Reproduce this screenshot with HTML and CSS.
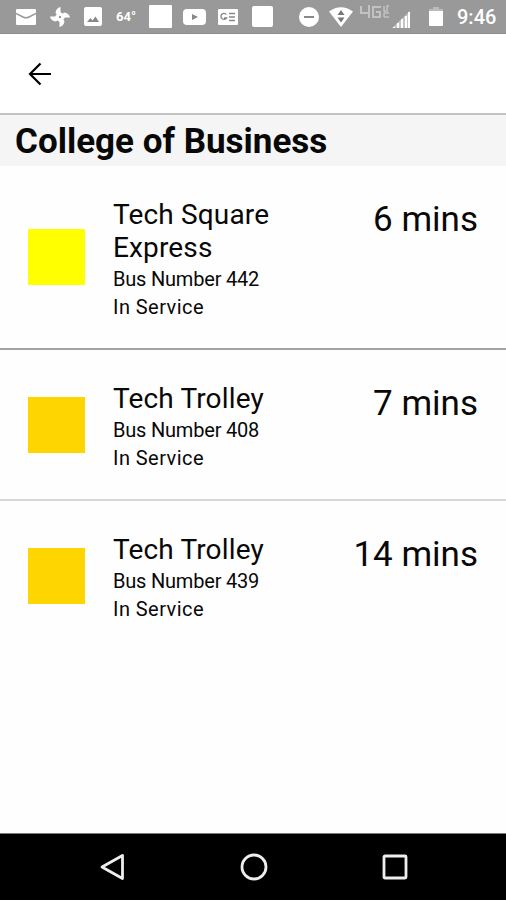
FILE: index.html
```html
<!DOCTYPE html>
<html lang="en">
<head>
<meta charset="utf-8">
<title>College of Business</title>
<link rel="stylesheet" href="styles.css">
</head>
<body>
<div class="screen">
  <header class="status">
    <svg class="ico mail" width="20" height="16" viewBox="0 0 20 16"><rect width="20" height="16" rx="1" fill="#fff"/><path d="M0 4.500l7 3.500q3 1.500 6 0l7-3.500" fill="none" stroke="#999" stroke-width="1.500"/></svg>
    <svg class="ico fan" width="20" height="20" viewBox="0 0 20 20"><g fill="#fff"><path d="M10 11L5.500 6Q6 1 10.500 0V5L13 7z"/><path d="M9 10L14 5.500Q19 6 20 10.500H15L13 13z"/><path d="M10 9L14.500 14Q14 19 9.500 20V15L7 13z"/><path d="M11 10L6 14.500Q1 14 0 9.500H5L7 7z"/></g><circle cx="10" cy="10" r="1.200" fill="#999"/></svg>
    <svg class="ico photo" width="18" height="19" viewBox="0 0 18 19"><rect width="18" height="19" rx="2" fill="#fff"/><path d="M3 15l3.500-4 2 2.500 3-4L15 15z" fill="#888"/></svg>
    <span class="temp">64°</span>
    <span class="block large"></span>
    <svg class="ico tube" width="23" height="16" viewBox="0 0 23 16"><rect width="23" height="16" rx="4" fill="#fff"/><path d="M9 5v6l6-3z" fill="#888"/></svg>
    <svg class="ico news" width="20" height="16" viewBox="0 0 20 16"><rect width="20" height="16" rx="1" fill="#fff"/><path d="M8.300 5.500A3 3 0 1 0 8.500 9H6M11 4.500h6M11 8h6M11 11.500h6" fill="none" stroke="#888" stroke-width="1.400"/></svg>
    <span class="block"></span>
    <svg class="ico dnd" width="20" height="20" viewBox="0 0 20 20"><circle cx="10" cy="10" r="10" fill="#fff"/><path d="M5 10h10" stroke="#888" stroke-width="2"/></svg>
    <svg class="ico wifi" width="24" height="20" viewBox="0 0 24 20"><path d="M0 4.500Q12-4 24 4.500L12 20z" fill="#fff"/><path d="M8.500 8L12 3l3.500 5zM8.500 10.500h7L12 15.500z" fill="#777"/></svg>
    <svg class="ico lte" width="32" height="15" viewBox="0 0 32 15"><g fill="none" stroke="#c2c2c2" stroke-width="2"><path d="M2 1v7h8M10 0v13M22 2h-8v10h7V7h-4"/><path d="M25 1v5h4M25 8h5M25 12h5M25 8v4M30 1h-2v4" stroke-width="1.500"/></g></svg>
    <svg class="ico signal" width="18" height="17" viewBox="0 0 18 17"><path d="M0 17L18 0v17z" fill="#c4c4c4"/><path d="M2 16v1M6 12v5M10 8v9M14 5v12M17 1v16" stroke="#fff" stroke-width="2"/></svg>
    <svg class="ico battery" width="14" height="19" viewBox="0 0 14 19"><path d="M4 0h6v2h4v3H0V2h4z" fill="#bbb"/><path d="M0 4h14v14q0 1-1 1H1q-1 0-1-1z" fill="#fff"/></svg>
    <span class="clock">9:46</span>
  </header>
  <nav class="appbar">
    <svg width="24" height="24" viewBox="0 0 24 24"><path d="M24 12H3M13.500 1.500L3 12l10.500 10.500" fill="none" stroke="#000" stroke-width="2.200"/></svg>
  </nav>
  <h1 class="title">College of Business</h1>
  <main class="list">
    <section class="row strong">
      <span class="swatch yellow"></span>
      <div class="info"><h2>Tech Square Express</h2><p class="bus">Bus Number 442</p><p class="state">In Service</p></div>
      <div class="mins">6 mins</div>
    </section>
    <section class="row">
      <span class="swatch gold"></span>
      <div class="info"><h2>Tech Trolley</h2><p class="bus">Bus Number 408</p><p class="state">In Service</p></div>
      <div class="mins">7 mins</div>
    </section>
    <section class="row last">
      <span class="swatch gold"></span>
      <div class="info"><h2>Tech Trolley</h2><p class="bus">Bus Number 439</p><p class="state">In Service</p></div>
      <div class="mins">14 mins</div>
    </section>
  </main>
  <footer class="navbar">
    <svg width="28" height="28" viewBox="0 0 28 28"><path d="M23.500 2.500v23L3 14z"/></svg>
    <svg width="28" height="28" viewBox="0 0 28 28"><circle cx="14" cy="14" r="12"/></svg>
    <svg width="28" height="28" viewBox="0 0 28 28"><rect x="3" y="3" width="22" height="22" rx="1"/></svg>
  </footer>
</div>
</body>
</html>
```

FILE: styles.css
```css
* { box-sizing: border-box; margin: 0; padding: 0; }
body { font-family: Roboto, "Liberation Sans", sans-serif; background: #fefefe; color: #080808; }
svg { display: block; flex: none; }
.screen { display: flex; flex-direction: column; width: 506px; height: 900px; }
.status { display: flex; align-items: center; height: 34px; padding-left: 16px; background: #999; color: #fff; border-bottom: 1px solid #8d8d8d; flex: none; }
.fan { margin-left: 14px; }
.photo { margin-left: 14px; }
.temp { width: 22px; margin-left: 14px; font-size: 13px; font-weight: 700; white-space: nowrap; }
.block { width: 21px; height: 21px; margin-left: 14px; background: #fff; border-radius: 2px; flex: none; }
.block.large { width: 23px; height: 23px; margin-left: 11px; border-radius: 1px; }
.tube { margin-left: 11px; }
.news { margin-left: 12px; }
.dnd { margin-left: 26px; }
.wifi { margin-left: 10px; }
.lte { margin: 0 0 9px 6px; }
.signal { margin: 5px 0 0 1px; }
.battery { margin-left: 19px; }
.clock { margin-left: 14px; font-size: 20px; font-weight: 500; line-height: 36px; }
.appbar { display: flex; align-items: center; height: 79px; padding-left: 27px; background: #fff; flex: none; }
.title { height: 53px; padding-left: 15px; background: #f5f5f5; border-top: 2px solid #c2c2c2; font-size: 35px; font-weight: 700; line-height: 54px; flex: none; white-space: nowrap; }
.list { flex: 1; }
.row { display: flex; align-items: flex-start; padding: 32px 28px 28px; border-bottom: 2px solid #d8d8d8; }
.row.strong { border-bottom-color: #a2a2a2; }
.row.last { border-bottom: 0; }
.swatch { width: 57px; height: 56px; margin-bottom: 4px; align-self: center; flex: none; }
.yellow { background: #ff0; }
.gold { background: #ffd500; }
.info { width: 190px; margin-left: 28px; }
.info h2 { font-size: 28px; font-weight: 400; line-height: 33px; letter-spacing: 0.150px; }
.info p { font-size: 20px; line-height: 28px; padding-top: 1px; margin-bottom: -1px; }
.info .bus { letter-spacing: -0.200px; }
.info .state { letter-spacing: 0.450px; }
.mins { margin-left: auto; font-size: 35px; line-height: 44px; white-space: nowrap; }
.navbar { display: flex; justify-content: center; align-items: center; gap: 113px; height: 67px; padding-left: 1px; background: #000; border-top: 1px solid #777; flex: none; }
.navbar svg { fill: none; stroke: #eee; stroke-width: 2.800; stroke-linejoin: round; }
```
